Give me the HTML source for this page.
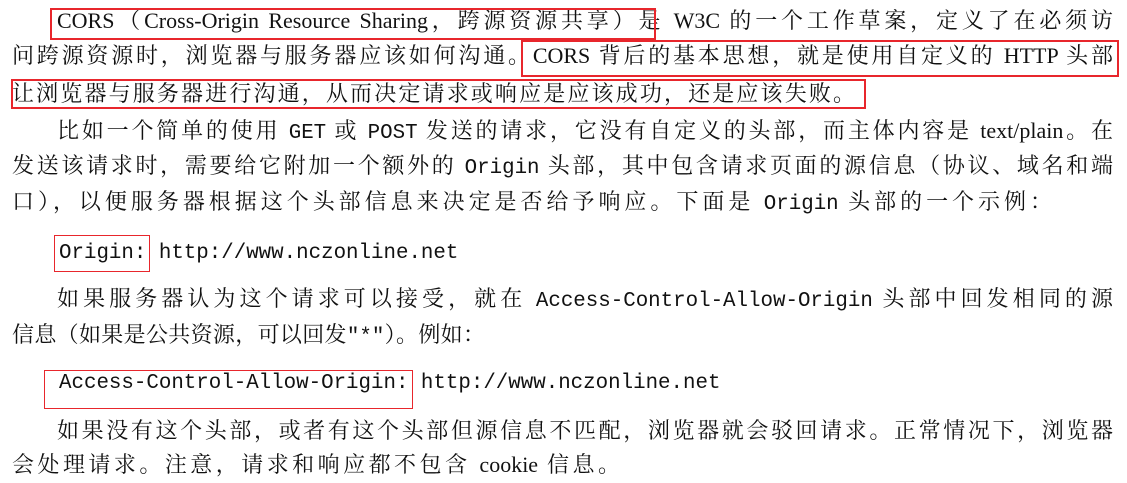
<!DOCTYPE html>
<html><head><meta charset="utf-8"><style>
html,body{margin:0;padding:0;background:#fff;}
body{width:1127px;height:483px;position:relative;overflow:hidden;font-family:"Liberation Serif","Noto Serif CJK SC",serif;font-size:22px;color:#111;}
.l{position:absolute;left:12px;width:1101px;height:30px;line-height:30px;white-space:nowrap;}
.j{text-align:justify;text-align-last:justify;white-space:normal;}
.m{font-family:"Liberation Mono","Courier New",monospace;font-size:20.8px;}
.b{position:absolute;border:2px solid #e8262c;box-sizing:border-box;}
.t{position:absolute;border:1.5px solid #e8262c;box-sizing:border-box;}
</style></head><body>
<div class="l j" style="top:6px;left:57px;width:1056px">CORS（Cross-Origin Resource Sharing，跨源资源共享）是 W3C 的一个工作草案，定义了在必须访</div>
<div class="l j" style="top:41px">问跨源资源时，浏览器与服务器应该如何沟通。CORS 背后的基本思想，就是使用自定义的 HTTP 头部</div>
<div class="l j" style="top:79px;width:843px">让浏览器与服务器进行沟通，从而决定请求或响应是应该成功，还是应该失败。</div>
<div class="l j" style="top:116px;left:57px;width:1056px">比如一个简单的使用 <span class="m">GET</span> 或 <span class="m">POST</span> 发送的请求，它没有自定义的头部，而主体内容是 text/plain。在</div>
<div class="l j" style="top:151px">发送该请求时，需要给它附加一个额外的 <span class="m">Origin</span> 头部，其中包含请求页面的源信息（协议、域名和端</div>
<div class="l j" style="top:187px;width:1040px">口），以便服务器根据这个头部信息来决定是否给予响应。下面是 <span class="m">Origin</span> 头部的一个示例：</div>
<div class="l m" style="top:239px;left:59px">Origin: http://www.nczonline.net</div>
<div class="l j" style="top:284px;left:57px;width:1056px">如果服务器认为这个请求可以接受，就在 <span class="m">Access-Control-Allow-Origin</span> 头部中回发相同的源</div>
<div class="l j" style="top:320px;width:473px">信息（如果是公共资源，可以回发<span class="m">"*"</span>）。例如：</div>
<div class="l m" style="top:369px;left:59px">Access-Control-Allow-Origin: http://www.nczonline.net</div>
<div class="l j" style="top:416px;left:57px;width:1056px">如果没有这个头部，或者有这个头部但源信息不匹配，浏览器就会驳回请求。正常情况下，浏览器</div>
<div class="l j" style="top:450px;width:608px">会处理请求。注意，请求和响应都不包含 cookie 信息。</div>
<div class="b" style="left:50px;top:8px;width:606px;height:32px"></div>
<div class="b" style="left:521px;top:40px;width:598px;height:37px"></div>
<div class="b" style="left:11px;top:79px;width:855px;height:30px"></div>
<div class="t" style="left:54px;top:235px;width:96px;height:37px"></div>
<div class="t" style="left:44px;top:370px;width:369px;height:39px"></div>
</body></html>
